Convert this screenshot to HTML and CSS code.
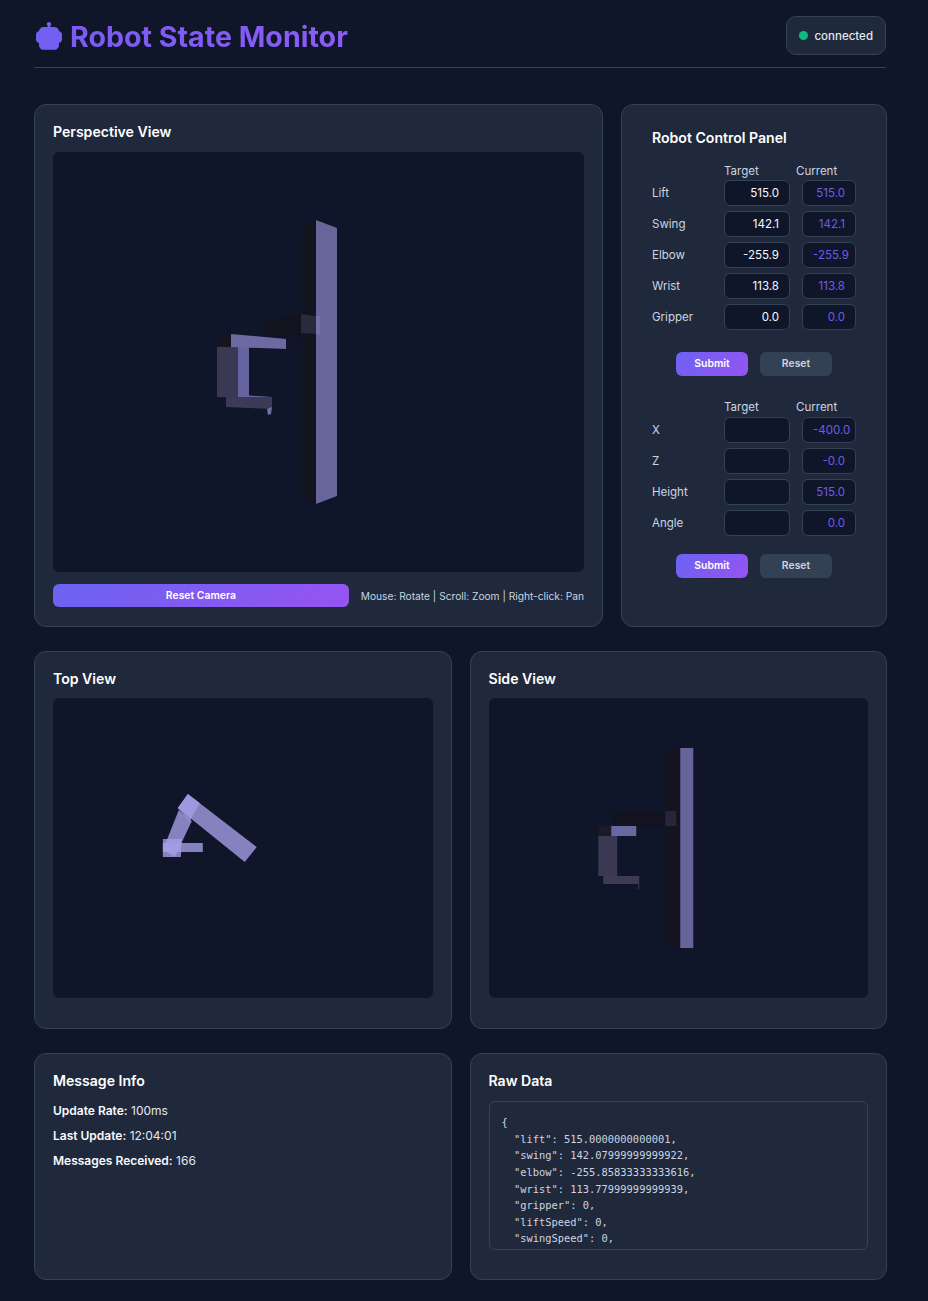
FILE: index.html
```html
<!DOCTYPE html>
<html lang="en">
    <head>
        <meta charset="UTF-8">
        <meta name="viewport" content="width=device-width, initial-scale=1.0">
        <title>Robot State Monitor</title>
        <link rel="stylesheet" href="styles.css">
    </head>
    <body>
        <header class="top">
            <h1 class="brand">
                <svg class="brand-icon" viewBox="0 0 26 28"><path d="M13 0c1.3 0 2.2 1 2.2 2.2 0 .8-.4 1.4-1 1.8v1h4c2.500 0 4.300 1.600 4.800 4l1 .5c1.200 .6 2 1.700 2 3v5c0 1.300-.8 2.400-2 3l-1 .5v2c0 2.600-2 4.800-4.500 4.800H7.500C5 27.800 3 25.600 3 23v-2l-1-.5C.8 19.900 0 18.800 0 17.500v-5c0-1.300 .8-2.400 2-3l1-.5C3.500 6.600 5.300 5 7.800 5h4V4c-.6-.4-1-1-1-1.800C10.800 1 11.700 0 13 0z"/></svg>
                <span class="brand-text">Robot State Monitor</span>
            </h1>
            <div class="status"><span class="dot"></span>connected</div>
        </header>

        <section class="row row-main">
            <div class="card">
                <h2>Perspective View</h2>
                <svg class="view view-main" viewBox="0 0 531 420">
                    <polygon points="248,76 263,68 263,352 248,343" fill="#13141f"/>
                    <polygon points="263,68 284,76 284,344 263,352" fill="#67659a"/>
                    <polygon points="210,171 248,162 248,185 210,184" fill="#12131e"/>
                    <polygon points="248,162 263,164 263,182 248,181" fill="#2a2a3d"/>
                    <polygon points="263,164 267,164 267,183 263,182" fill="#7472a8"/>
                    <polygon points="167,183 178,182 178,195 167,195" fill="#15151f"/>
                    <polygon points="164,195 185,195 185,245 164,245" fill="#3a3852"/>
                    <polygon points="185,195 196,195 196,244 185,245" fill="#6563a0"/>
                    <polygon points="178,182 233,187 233,197 178,195" fill="#6c6aa3"/>
                    <polygon points="173,245 185,245 196,244 219,245 219,257 173,255" fill="#3c3a57"/>
                    <polygon points="185,245 190,243 219,245 196,245" fill="#6563a0"/>
                    <polygon points="214,257 219,255 218,262 215,263" fill="#7270a8"/>
                </svg>
                <div class="camera-bar">
                    <button class="btn btn-primary btn-wide">Reset Camera</button>
                    <span class="hint">Mouse: Rotate | Scroll: Zoom | Right-click: Pan</span>
                </div>
            </div>

            <div class="card card-panel">
                <h2>Robot Control Panel</h2>
                <div class="form-grid">
                    <span></span><span class="head">Target</span><span class="head head-current">Current</span>
                    <label for="lift">Lift</label><input id="lift" class="field" value="515.0"><div class="field current">515.0</div>
                    <label for="swing">Swing</label><input id="swing" class="field" value="142.1"><div class="field current">142.1</div>
                    <label for="elbow">Elbow</label><input id="elbow" class="field" value="-255.9"><div class="field current">-255.9</div>
                    <label for="wrist">Wrist</label><input id="wrist" class="field" value="113.8"><div class="field current">113.8</div>
                    <label for="gripper">Gripper</label><input id="gripper" class="field" value="0.0"><div class="field current">0.0</div>
                </div>
                <div class="actions">
                    <button class="btn btn-primary">Submit</button>
                    <button class="btn btn-muted">Reset</button>
                </div>
                <div class="form-grid form-grid-pose">
                    <span></span><span class="head">Target</span><span class="head head-current">Current</span>
                    <label for="x">X</label><input id="x" class="field"><div class="field current">-400.0</div>
                    <label for="z">Z</label><input id="z" class="field"><div class="field current">-0.0</div>
                    <label for="height">Height</label><input id="height" class="field"><div class="field current">515.0</div>
                    <label for="angle">Angle</label><input id="angle" class="field"><div class="field current">0.0</div>
                </div>
                <div class="actions actions-last">
                    <button class="btn btn-primary">Submit</button>
                    <button class="btn btn-muted">Reset</button>
                </div>
            </div>
        </section>

        <section class="row row-split">
            <div class="card">
                <h2>Top View</h2>
                <svg class="view view-small" viewBox="0 0 380 300">
                    <polygon class="link" points="135,96 204,149 192,164 125,110"/>
                    <polygon class="link" points="126,112 139,123 122,159 110,152"/>
                    <polygon class="link" points="110,145 150,145 150,154 110,154"/>
                    <polygon class="link" points="135,96 147,105 137,123 125,110"/>
                    <polygon class="link" points="110,141 129,141 128,159 110,159"/>
                </svg>
            </div>
            <div class="card">
                <h2>Side View</h2>
                <svg class="view view-small" viewBox="0 0 379 300">
                    <rect x="176" y="50" width="15" height="200" fill="#13141f"/>
                    <rect x="191" y="50" width="13" height="200" fill="#66649a"/>
                    <rect x="124" y="113" width="52" height="15" fill="#12131e"/>
                    <rect x="176" y="113" width="11" height="15" fill="#272538"/>
                    <rect x="109" y="128" width="14" height="10" fill="#1a1a28"/>
                    <rect x="122" y="128" width="25" height="10" fill="#6a68a0"/>
                    <rect x="109" y="138" width="19" height="40" fill="#3a3852"/>
                    <rect x="114" y="178" width="36" height="8" fill="#3c3a55"/>
                    <rect x="149" y="186" width="1" height="5" fill="#3c3a55"/>
                </svg>
            </div>
        </section>

        <section class="row row-split">
            <div class="card">
                <h2>Message Info</h2>
                <p class="info"><strong>Update Rate:</strong> 100ms</p>
                <p class="info"><strong>Last Update:</strong> 12:04:01</p>
                <p class="info"><strong>Messages Received:</strong> 166</p>
            </div>
            <div class="card">
                <h2>Raw Data</h2>
                <pre class="raw">{
  "lift": 515.0000000000001,
  "swing": 142.07999999999922,
  "elbow": -255.85833333333616,
  "wrist": 113.77999999999939,
  "gripper": 0,
  "liftSpeed": 0,
  "swingSpeed": 0,</pre>
            </div>
        </section>
    </body>
</html>
```

FILE: styles.css
```css
* {
    box-sizing: border-box;
}

body {
    margin: 0;
    padding: 16px 41px 21px 34px;
    background-color: #0f1629;
    color: #e2e8f0;
    font-family: Inter, "Liberation Sans", sans-serif;
}

/* header */

.top {
    display: flex;
    align-items: center;
    justify-content: space-between;
    height: 52px;
    padding-bottom: 12px;
    margin-right: 1px;
    margin-bottom: 36px;
    border-bottom: 1px solid #334155;
}

.brand {
    display: flex;
    align-items: center;
    margin: 2px 0 0;
    font-size: 28.6px;
    font-weight: 700;
    line-height: 36px;
}

.brand-icon {
    width: 26px;
    height: 28px;
    margin: -2px 8px 0 2px;
    fill: #7360f2;
}

.brand-text {
    background: linear-gradient(90deg, #7a5bf3, #8b5cf6);
    -webkit-background-clip: text;
    background-clip: text;
    color: transparent;
}

.status {
    display: flex;
    align-items: center;
    gap: 6px;
    height: 39px;
    padding: 0 12px;
    background-color: #1f293b;
    border: 1px solid #334155;
    border-radius: 10px;
    font-size: 11.52px;
    font-weight: 500;
}

.dot {
    width: 9px;
    height: 9px;
    border-radius: 50%;
    background-color: #10b981;
}

/* layout */

.row {
    display: grid;
    gap: 18px;
    margin-bottom: 24px;
}

.row:last-child {
    margin-bottom: 0;
}

.row-main {
    grid-template-columns: 569px 1fr;
}

.row-split {
    grid-template-columns: repeat(2, 1fr);
}

.card {
    padding: 18px;
    background-color: #1f293b;
    border: 1px solid #334155;
    border-radius: 12px;
}

.card h2 {
    margin: 0 0 12px;
    font-size: 14.08px;
    font-weight: 600;
    line-height: 17px;
    color: #fff;
}

.card-panel {
    padding: 24px 30px;
}

.card-panel h2 {
    margin-bottom: 20px;
}

.view {
    display: block;
    width: 100%;
    background-color: #0f1629;
    border-radius: 6px;
}

.view-main {
    height: 420px;
}

.view-small {
    height: 300px;
    margin-top: -1px;
    margin-bottom: 12px;
}

.link {
    fill: #a49ee6;
    opacity: 0.8;
}

.camera-bar {
    display: flex;
    align-items: center;
    gap: 12px;
    margin-top: 12px;
    margin-bottom: 1px;
}

.hint {
    font-size: 10.2px;
    color: #cbd5e1;
    white-space: nowrap;
}

/* control panel */

.form-grid {
    display: grid;
    grid-template-columns: 60px 66px 54px;
    grid-template-rows: 9px;
    grid-auto-rows: 26px;
    column-gap: 12px;
    row-gap: 5px;
    align-items: center;
    font-size: 11.52px;
    color: #cbd5e1;
}

.form-grid-pose {
    grid-template-rows: 10px;
}

.head {
    line-height: 14px;
    white-space: nowrap;
}

.head-current {
    margin-left: -6px;
}

.field {
    width: 100%;
    height: 26px;
    padding: 0 10px;
    background-color: #0f1629;
    border: 1px solid #334155;
    border-radius: 6px;
    color: #f8fafc;
    font-family: inherit;
    font-size: 11.52px;
    line-height: 24px;
    text-align: right;
}

.current {
    color: #6c5ce7;
    white-space: nowrap;
}

.actions {
    display: flex;
    justify-content: center;
    gap: 12px;
    width: 204px;
    margin: 22px 0 26px;
}

.actions-last {
    margin: 18px 0 0;
}

.btn {
    width: 72px;
    height: 24px;
    padding: 0 0 1px;
    border: none;
    border-radius: 6px;
    font-family: inherit;
    font-size: 10.4px;
    font-weight: 600;
    cursor: pointer;
}

.btn-primary {
    background: linear-gradient(135deg, #6b63f1, #9653f3);
    color: #fff;
}

.btn-muted {
    background-color: #334155;
    color: #cbd5e1;
}

.btn-wide {
    flex: 1;
    height: 23px;
}

/* info and raw */

.info {
    margin: 0 0 8px;
    font-size: 12px;
    line-height: 17px;
    color: #e2e8f0;
}

.card h2 + .info {
    margin-top: 13px;
}

.info strong {
    font-weight: 600;
    color: #f8fafc;
}

.raw {
    height: 149px;
    margin: 0 0 11px;
    padding: 12px;
    overflow: hidden;
    border: 1px solid #334155;
    border-radius: 6px;
    font-family: "DejaVu Sans Mono", "Liberation Mono", monospace;
    font-size: 10.4px;
    line-height: 16.64px;
    color: #cbd5e1;
}
```
